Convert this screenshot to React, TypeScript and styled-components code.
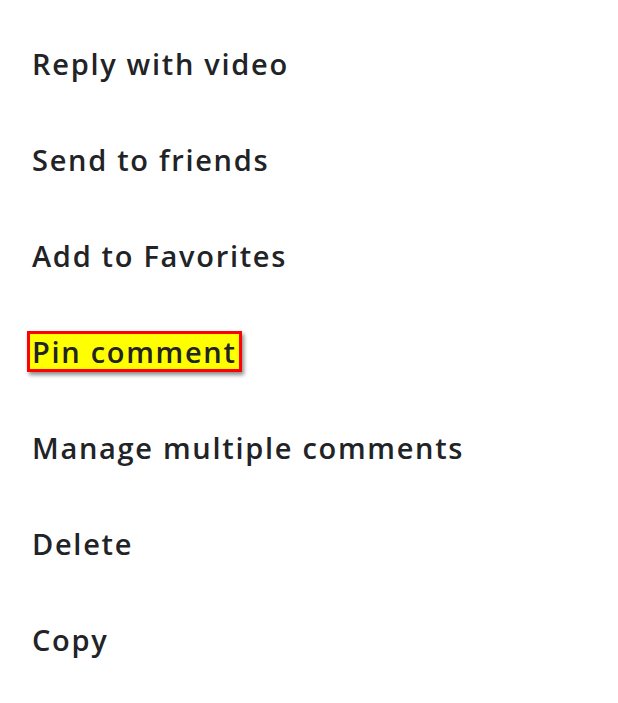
import styled, { createGlobalStyle } from "styled-components";

const GlobalStyle = createGlobalStyle`
  html, body {
    margin: 0;
    padding: 0;
    background: #ffffff;
  }
`;

const Sheet = styled.ul`
  list-style: none;
  margin: 0;
  padding: 15px 0 16px;
  width: 618px;
  background: #ffffff;
  font-family: "Open Sans", "Liberation Sans", sans-serif;
`;

const Item = styled.li`
  height: 96px;
  display: flex;
  align-items: center;
  padding-left: 32px;
  font-size: 29px;
  font-weight: 600;
  letter-spacing: 1.7px;
  color: #222326;
  cursor: pointer;
`;

const Highlight = styled.span`
  background: #ffff00;
  border: 3px solid #ff0000;
  padding: 0 2px;
  margin-left: -5px;
  line-height: 35px;
  box-shadow: 2px 3px 4px rgba(0, 0, 0, 0.45);
`;

const items = [
  "Reply with video",
  "Send to friends",
  "Add to Favorites",
  "Pin comment",
  "Manage multiple comments",
  "Delete",
  "Copy",
];

export default function App() {
  return (
    <>
      <GlobalStyle />
      <Sheet>
        {items.map((label) => (
          <Item key={label}>
            {label === "Pin comment" ? <Highlight>{label}</Highlight> : label}
          </Item>
        ))}
      </Sheet>
    </>
  );
}
